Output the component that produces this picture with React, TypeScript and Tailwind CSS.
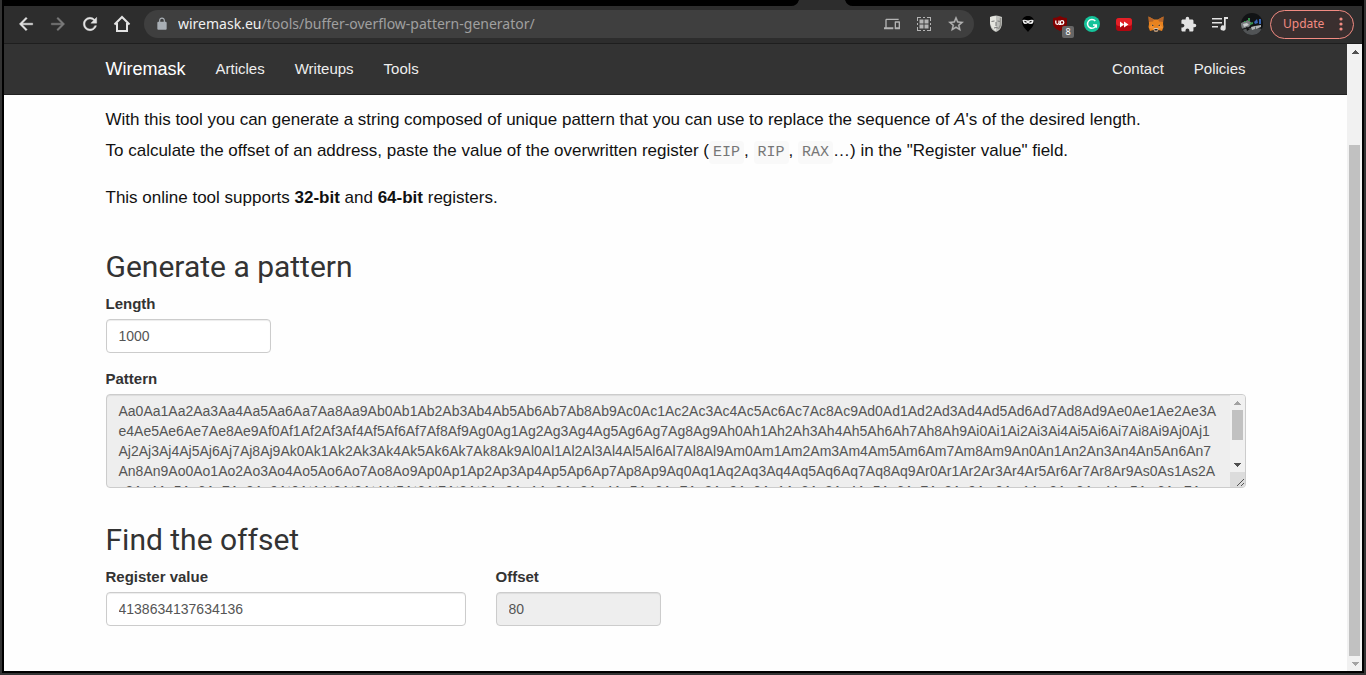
import React from "react";

const UPPER = "ABCDEFGHIJKLMNOPQRSTUVWXYZ";

function createPattern(length: number): string {
  let out = "";
  for (const a of UPPER) {
    for (const b of UPPER.toLowerCase()) {
      for (let d = 0; d < 10; d++) {
        out += a + b + d;
        if (out.length >= length) return out.slice(0, length);
      }
    }
  }
  return out;
}

const iconButton = "flex h-6 w-6 items-center justify-center";

function Material({ d, size = "20", color = "#e3e3e3", stroke = 0.5 }: { d: string; size?: string; color?: string; stroke?: number }) {
  return (
    <svg width={size} height={size} viewBox="0 0 24 24" fill={color} stroke={color} strokeWidth={stroke} aria-hidden="true">
      <path d={d} />
    </svg>
  );
}

function DevicesIcon() {
  return (
    <Material
      size="16"
      color="#b4b4b4"
      stroke={0}
      d="M4 6h18V4H4c-1.100 0-2 .9-2 2v11H0v3h14v-3H4V6zm19 2h-6c-.55 0-1 .45-1 1v10c0 .55.45 1 1 1h6c.55 0 1-.45 1-1V9c0-.55-.45-1-1-1zm-1 9h-4v-7h4v7z"
    />
  );
}

function GridIcon() {
  return (
    <svg width="14" height="14" viewBox="0 0 14 14" fill="#b4b4b4" aria-hidden="true">
      <path d="M0 4V0h4v1H1v3zM10 0h4v4h-1V1h-3zM0 10h1v3h3v1H0zM13 10h1v4h-4v-1h3zM6 0h2v1H6zM6 13h2v1H6zM0 6h1v2H0zM13 6h1v2h-1z" />
      <path d="M2.500 2.500h4v4h-4zM7.500 2.500h4v4h-4zM2.500 7.500h4v4h-4zM7.500 7.500h4v4h-4z" />
    </svg>
  );
}

function MaskIcon() {
  return (
    <svg width="14" height="18" viewBox="0 0 14 18" aria-hidden="true">
      <path d="M1 2Q7-1 13 2v6q0 5-4 8l-2 1-2-1Q1 13 1 8z" fill="#bfc0bc" />
      <path d="M7 1v15l-2-1Q2 12 1 8V2z" fill="#e5e5df" />
      <path d="M2.500 6.500l3-.5M8.500 6l3 .5M7 7v4M5 13q2-1 4 0" stroke="#777" fill="none" />
      <path d="M11.500 3v7l-2 4" stroke="#93938e" strokeWidth="1.500" fill="none" />
    </svg>
  );
}

function NinjaIcon() {
  return (
    <svg width="14" height="18" viewBox="0 0 14 18" aria-hidden="true">
      <path d="M7 1C3 1 1 3.500 1 7c0 4 3.500 7 6 10 2.500-3 6-6 6-10 0-3.500-2-6-6-6z" fill="#000" />
      <path d="M1.500 5Q4 4.500 7 5.500q3-1 5.500-.5.300 4-2.500 4T7 8Q6 9 4 9T1.500 5z" fill="#ececec" />
      <path d="M3.500 6.300l2 1M10.500 6.300l-2 1" stroke="#111" strokeWidth="1.200" />
    </svg>
  );
}

function ShieldIcon() {
  return (
    <svg width="22" height="22" viewBox="0 0 22 22" aria-hidden="true">
      <path d="M8 1Q5 3 1 3v5c0 4 3 6 7 8 4-2 7-4 7-8V3Q11 3 8 1z" fill="#800000" />
      <path d="M3.800 5.500v2.300q0 1.500 1.500 1.500T7 7.800V5.500M7 9.300h2" stroke="#fff" strokeWidth="1.300" fill="none" />
      <circle cx="10" cy="7.500" r="1.800" stroke="#fff" strokeWidth="1.300" fill="none" />
    </svg>
  );
}

function GrammarIcon() {
  return (
    <svg width="16" height="16" viewBox="0 0 16 16" aria-hidden="true">
      <circle cx="8" cy="8" r="8" fill="#15c39a" />
      <path d="M11.300 5A4.400 4.400 0 1 0 12.200 9H9M12.300 9v2.700" stroke="#fff" strokeWidth="1.500" fill="none" />
    </svg>
  );
}

function SkipIcon() {
  return (
    <svg width="16" height="13" viewBox="0 0 16 13" aria-hidden="true">
      <rect width="16" height="13" rx="3" fill="#b00710" />
      <rect width="16" height="8" rx="3" fill="#e32027" />
      <path d="M4 3.500L8 6.500l-4 3zM8 3.500l4.500 3-4.500 3z" fill="#fff" />
    </svg>
  );
}

function FoxIcon() {
  return (
    <svg width="16" height="16" viewBox="0 0 16 16" aria-hidden="true">
      <path d="M.5.5L6 3.500h4L15.500.5 15 8l.5 3-1.500 4-3.500-1-1 1.500h-3l-1-1.500L2 15 .5 11 1 8z" fill="#e8821e" />
      <path d="M.5.500L6 3.500 5 5.500 1 6zM15.500.5L10 3.500 11 5.500l4 .5z" fill="#b5652a" />
      <path d="M5 7l1 6-5-1zM11 7l-1 6 5-1z" fill="#f39335" />
      <path d="M4 8.500l2 1-2 .5zM12 8.500l-2 1 2 .5z" fill="#233447" />
      <path d="M5.500 13L6.500 12h3l1 1-1 2.500h-3z" fill="#d5c4b4" />
      <path d="M6.500 13h3v1.500h-3z" fill="#222" />
    </svg>
  );
}

function Avatar() {
  return (
    <svg width="22" height="22" viewBox="0 0 22 22" aria-hidden="true">
      <defs>
        <clipPath id="avatar">
          <circle cx="11" cy="11" r="11" />
        </clipPath>
      </defs>
      <g clipPath="url(#avatar)">
        <path d="M0 0h22v22H0z" fill="#111315" />
        <path d="M0 10l7-3 4 3-3 4-8 2z" fill="#777b7d" />
        <path d="M2 11l4-1 2 2-5 2z" fill="#c8cccd" />
        <path d="M1 17q9-4 20-1l-4 6H4z" fill="#515456" />
        <path d="M7 5h2v3H7zM9 10l3-1v2l-3 1zM3 8h2v1H3z" fill="#35924c" />
        <path d="M13 9l3-3 1 4-3 1zM18 6h2v5h-2z" fill="#3866b5" />
        <path d="M14 13l6-1v2l-5 2zM10 14l4-1v3l-3 1z" fill="#b4b7b8" />
        <path d="M5 14l4 2-3 2z" fill="#111" />
      </g>
    </svg>
  );
}

function Arrow({ up = false, muted = false }: { up?: boolean; muted?: boolean }) {
  return (
    <svg width="8" height="4" viewBox="0 0 8 4" fill={muted ? "#a3a3a3" : "#505050"} shapeRendering="crispEdges" aria-hidden="true">
      <path d={up ? "M0 4L4 0l4 4z" : "M0 0h8L4 4z"} />
    </svg>
  );
}

function Toolbar() {
  return (
    <header className="flex h-[38px] items-center gap-2 border-b border-[#1e1e1e] bg-[#2d2d2d] pr-2 pb-px pl-[10px]">
      <div className="flex gap-2">
        <button aria-label="Back" className={iconButton}>
          <Material d="M20 11H7.830l5.590-5.590L12 4l-8 8 8 8 1.410-1.410L7.830 13H20v-2z" />
        </button>
        <button aria-label="Forward" className={iconButton}>
          <Material color="#7a7a7a" d="M12 4l-1.410 1.410L16.170 11H4v2h12.170l-5.580 5.590L12 20l8-8z" />
        </button>
        <button aria-label="Reload" className={iconButton}>
          <Material d="M17.650 6.350A7.958 7.958 0 0 0 12 4c-4.420 0-7.990 3.580-7.990 8s3.570 8 7.990 8c3.730 0 6.840-2.550 7.730-6h-2.080A5.990 5.990 0 0 1 12 18c-3.310 0-6-2.690-6-6s2.690-6 6-6c1.660 0 3.140.69 4.220 1.780L13 11h7V4l-2.350 2.350z" />
        </button>
        <button aria-label="Home" className={iconButton}>
          <svg width="20" height="20" viewBox="0 0 20 20" fill="none" stroke="#e3e3e3" strokeWidth="2" aria-hidden="true">
            <path d="M2.500 10.500L10 3l7.500 7.500M5 9v8h10V9" />
          </svg>
        </button>
      </div>
      <div className="mx-[2px] flex h-7 min-w-0 flex-1 items-center rounded-full bg-[#3f3f3f] pr-[6px] pl-[11px]">
        <Material
          size="14"
          color="#a9afb5"
          stroke={0}
          d="M18 8h-1V6c0-2.760-2.240-5-5-5S7 3.240 7 6v2H6c-1.100 0-2 .9-2 2v10c0 1.100.9 2 2 2h12c1.100 0 2-.9 2-2V10c0-1.100-.9-2-2-2zM9 6c0-1.660 1.340-3 3-3s3 1.340 3 3v2H9V6z"
        />
        <p className="ml-[9px] min-w-0 flex-1 truncate font-['Noto_Sans',sans-serif] text-sm text-[#a0a0a0]">
          <span className="text-[#f0f0f0]">wiremask.eu</span>/tools/buffer-overflow-pattern-generator/
        </p>
        <div className="flex gap-2">
          <button aria-label="Send to your devices" className={iconButton}>
            <DevicesIcon />
          </button>
          <button aria-label="Create QR code" className={iconButton}>
            <GridIcon />
          </button>
          <button aria-label="Bookmark this page" className={iconButton}>
            <Material
              size="18"
              color="#b4b4b4"
              d="M22 9.240l-7.190-.62L12 2 9.190 8.630 2 9.240l5.460 4.730L5.820 21 12 17.270 18.180 21l-1.630-7.030L22 9.240zM12 15.400l-3.760 2.270 1-4.280-3.320-2.880 4.380-.38L12 6.100l1.710 4.040 4.380.38-3.320 2.880 1 4.280L12 15.400z"
            />
          </button>
        </div>
      </div>
      <div className="flex gap-2">
        <button aria-label="Mask extension" className={iconButton}>
          <MaskIcon />
        </button>
        <button aria-label="Ninja extension" className={iconButton}>
          <NinjaIcon />
        </button>
        <button aria-label="Ad blocker, 8 blocked" className="relative h-6 w-6 pt-[3px] pl-1">
          <ShieldIcon />
          <span className="absolute top-[14px] left-[14px] h-3 w-3 rounded-xs bg-[#666666] text-center font-['Noto_Sans',sans-serif] text-[9px] leading-3 text-white">
            8
          </span>
        </button>
        <button aria-label="Grammar checker" className={iconButton}>
          <GrammarIcon />
        </button>
        <button aria-label="Ad skipper" className={iconButton}>
          <SkipIcon />
        </button>
        <button aria-label="Wallet" className={iconButton}>
          <FoxIcon />
        </button>
        <button aria-label="Extensions" className={iconButton}>
          <Material
            size="17"
            stroke={0}
            d="M20.500 11H19V7c0-1.100-.9-2-2-2h-4V3.500a2.500 2.500 0 0 0-5 0V5H4c-1.100 0-1.990.9-1.990 2v3.800H3.500c1.490 0 2.700 1.210 2.700 2.700s-1.210 2.700-2.700 2.700H2V20c0 1.100.9 2 2 2h3.800v-1.500c0-1.490 1.210-2.700 2.700-2.700 1.490 0 2.700 1.210 2.700 2.700V22H17c1.100 0 2-.9 2-2v-4h1.500a2.500 2.500 0 0 0 0-5z"
          />
        </button>
        <button aria-label="Media controls" className={iconButton}>
          <svg width="16" height="14" viewBox="0 0 16 14" fill="#e3e3e3" aria-hidden="true">
            <path d="M0 1h10v1.600H0zM0 5h10v1.600H0zM0 9h6v1.600H0zM12 0h4v2h-2.300v9A2.600 2.600 0 1 1 12 8.600z" />
          </svg>
        </button>
        <button aria-label="Profile" className={iconButton}>
          <Avatar />
        </button>
      </div>
      <button className="-ml-[2px] flex h-[29px] w-[84px] items-center justify-between rounded-full border border-[#f28b82] bg-[#3a2f2f] pr-[10px] pl-3 font-['Noto_Sans',sans-serif] text-xs text-[#f28b82]">
        Update
        <svg width="4" height="14" viewBox="0 0 4 14" fill="#f28b82" aria-hidden="true">
          <circle cx="2" cy="2" r="1.600" />
          <circle cx="2" cy="7" r="1.600" />
          <circle cx="2" cy="12" r="1.600" />
        </svg>
      </button>
    </header>
  );
}

function NavBar() {
  return (
    <nav className="h-[51px] border-b border-[#222222] bg-[#333333]">
      <div className="mx-auto flex h-full max-w-[1140px] items-center gap-[30px] text-[15px] leading-5 text-[#eeeeee]">
        <a href="#home" className="text-lg leading-5 text-white">
          Wiremask
        </a>
        <a href="#articles">Articles</a>
        <a href="#writeups">Writeups</a>
        <a href="#tools">Tools</a>
        <a href="#contact" className="ml-auto">
          Contact
        </a>
        <a href="#policies">Policies</a>
      </div>
    </nav>
  );
}

function Code({ children }: { children: React.ReactNode }) {
  return (
    <code className="rounded bg-[#f9f9f9] px-1 py-[3px] font-['Liberation_Mono',monospace] text-[15px] text-[#777777]">{children}</code>
  );
}

const heading = "mb-[11px] font-['Roboto',sans-serif] text-[30px] leading-[33px] text-[#333333]";
const label = "mb-[5px] block text-[15px] leading-5 font-bold text-[#333333]";
const field = "block h-[34px] rounded border border-[#cccccc] px-3 text-sm text-[#555555] shadow-[inset_0_1px_1px_rgba(0,0,0,0.075)] outline-none";

export default function App() {
  const [length, setLength] = React.useState("1000");
  const [register, setRegister] = React.useState("4138634137634136");
  const pattern = createPattern(Number(length) || 0);

  return (
    <div className="flex min-h-screen flex-col border-x-2 border-b-2 border-[#333333] bg-black px-[2px] pb-[2px] font-['Liberation_Sans',sans-serif]">
      <div className="flex h-[6px] justify-center pl-[278px]">
        <svg width="62" height="6" viewBox="0 0 62 6" fill="#2d2d2d" aria-hidden="true">
          <path d="M0 6q6 0 8-6h46q2 6 8 6z" />
        </svg>
      </div>
      <Toolbar />
      <div className="flex flex-1">
        <div className="min-w-0 flex-1 bg-[#fefefe]">
          <NavBar />
          <main className="mx-auto max-w-[1140px] pb-11">
            <p className="pt-[9px] text-[17px] leading-[31px] text-[#111111]">
              With this tool you can generate a string composed of unique pattern that you can use to replace the sequence of <em>A</em>'s of the
              desired length.
              <br />
              To calculate the offset of an address, paste the value of the overwritten register (<Code>EIP</Code>, <Code>RIP</Code>,{" "}
              <Code>RAX</Code>…) in the "Register value" field.
            </p>
            <p className="mt-[14px] text-[17px] leading-[31px] text-[#111111]">
              This online tool supports <strong>32-bit</strong> and <strong>64-bit</strong> registers.
            </p>

            <section className="mt-[37px]">
              <h2 className={heading}>Generate a pattern</h2>
              <label htmlFor="length" className={label}>
                Length
              </label>
              <input id="length" value={length} onChange={(e) => setLength(e.target.value)} className={`${field} w-[165px] bg-white`} />
              <label htmlFor="pattern" className={`${label} mt-4`}>
                Pattern
              </label>
              <div className="flex h-[94px] overflow-hidden rounded border border-[#cccccc] bg-[#eeeeee] shadow-[inset_0_1px_1px_rgba(0,0,0,0.075)]">
                <textarea
                  id="pattern"
                  readOnly
                  value={pattern}
                  className="block min-w-0 flex-1 resize-none overflow-hidden bg-transparent px-3 pt-[6px] text-sm leading-5 break-all text-[#555555] outline-none"
                />
                <div className="flex w-[15px] flex-col items-center bg-[#f1f1f1]" aria-hidden="true">
                  <div className="flex h-[15px] items-center">
                    <Arrow up muted />
                  </div>
                  <div className="h-[30px] w-[11px] bg-[#c1c1c1]" />
                  <div className="mt-auto flex h-[15px] items-center">
                    <Arrow />
                  </div>
                  <svg width="15" height="15" viewBox="0 0 15 15" aria-hidden="true">
                    <path d="M0 0h15v15H0z" fill="#dcdcdc" />
                    <path d="M7 14l7-7M11 14l3-3" stroke="#555" />
                  </svg>
                </div>
              </div>
            </section>

            <section className="mt-[35px]">
              <h2 className={heading}>Find the offset</h2>
              <div className="flex gap-[30px]">
                <div>
                  <label htmlFor="register" className={label}>
                    Register value
                  </label>
                  <input id="register" value={register} onChange={(e) => setRegister(e.target.value)} className={`${field} w-[360px] bg-white`} />
                </div>
                <div>
                  <label htmlFor="offset" className={label}>
                    Offset
                  </label>
                  <input id="offset" readOnly value="80" className={`${field} w-[165px] bg-[#eeeeee]`} />
                </div>
              </div>
            </section>
          </main>
        </div>
        <div className="flex w-[15px] flex-col items-center bg-[#f1f1f1]" aria-hidden="true">
          <div className="flex h-[15px] items-center">
            <Arrow up />
          </div>
          <div className="mt-[86px] w-[11px] flex-1 bg-[#c1c1c1]" />
          <div className="flex h-[15px] items-center">
            <Arrow muted />
          </div>
        </div>
      </div>
    </div>
  );
}
